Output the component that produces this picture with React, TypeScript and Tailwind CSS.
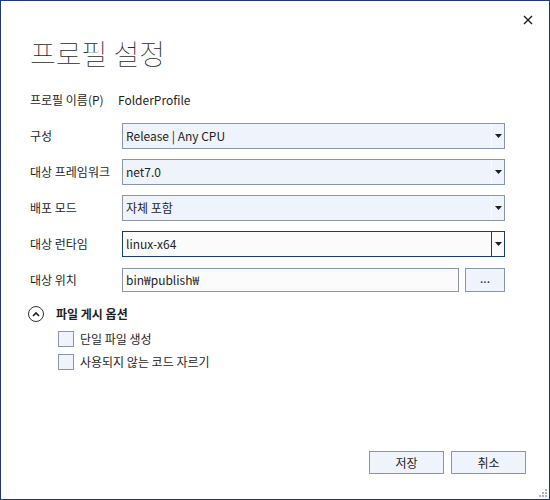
import React from 'react';

const font = { fontFamily: '"Noto Sans CJK KR", "Noto Sans", sans-serif' };

const Arrow = () => (
    <svg width="7" height="4" viewBox="0 0 7 4"><path d="M0 0h7L3.5 4z" fill="#1e1e1e" /></svg>
);

const Select = ({ value, focused }: { value: string; focused?: boolean }) => (
    <div className={`flex h-[26px] flex-1 items-stretch border ${focused ? 'border-[#1b3a73] bg-[#fbfbfb]' : 'border-[#8a95a7] bg-[#eff3fb]'}`}>
        <div className="flex flex-1 items-center pl-[3px] text-[12px] text-[#1e1e1e]">{value}</div>
        <div className={`flex w-[13px] items-center justify-center border-l ${focused ? 'border-[#1b3a73]' : 'border-[#fbfcfe]'}`}>
            <Arrow />
        </div>
    </div>
);

const Row = ({ label, children }: { label: string; children: React.ReactNode }) => (
    <div className="flex h-[36px] items-center">
        <div className="w-[92px] text-[12px] text-[#1e1e1e]">{label}</div>
        {children}
    </div>
);

const Check = ({ label }: { label: string }) => (
    <div className="flex h-[23px] items-center">
        <div className="h-[16px] w-[16px] border border-[#8a95a7] bg-[#eff3fb]" />
        <span className="ml-[6px] text-[12px] text-[#1e1e1e]">{label}</span>
    </div>
);

export default function App() {
    return (
        <div style={font} className="relative flex h-[500px] w-[550px] flex-col border border-[#1b3a73] bg-white pl-[29px] pr-[44px]">
            <button className="absolute right-[16px] top-[14px] text-[#1e1e1e]">
                <svg width="10" height="10" viewBox="0 0 10 10"><path d="M1 1l8 8M9 1l-8 8" stroke="#1e1e1e" strokeWidth="1.4" /></svg>
            </button>

            <h1 className="mt-[34px] text-[28px] font-thin leading-[36px] text-[#2a2a2a]">프로필 설정</h1>

            <div className="mt-[17px] flex h-[24px] items-center text-[12px] text-[#1e1e1e]">
                <span className="w-[88px]">프로필 이름(P)</span>
                <span>FolderProfile</span>
            </div>

            <div className="mt-[6px] flex flex-col">
                <Row label="구성"><Select value="Release | Any CPU" /></Row>
                <Row label="대상 프레임워크"><Select value="net7.0" /></Row>
                <Row label="배포 모드"><Select value="자체 포함" /></Row>
                <Row label="대상 런타임"><Select value="linux-x64" focused /></Row>
                <Row label="대상 위치">
                    <div className="flex h-[24px] flex-1 items-center border border-[#8a95a7] bg-[#fbfbfb] pl-[3px] text-[12px] text-[#1e1e1e]">bin₩publish₩</div>
                    <button className="ml-[6px] flex h-[24px] w-[40px] items-center justify-center border border-[#8a95a7] bg-[#eff3fb] pb-[4px] text-[12px] text-[#1e1e1e]">...</button>
                </Row>
            </div>

            <div className="ml-[-2px] mt-[6px] flex h-[20px] items-center">
                <div className="flex h-[16px] w-[16px] items-center justify-center rounded-full border border-[#333]">
                    <svg width="8" height="6" viewBox="0 0 8 6"><path d="M1 5l3-3 3 3" stroke="#1e1e1e" strokeWidth="1.6" fill="none" /></svg>
                </div>
                <span className="ml-[12px] text-[12px] font-bold text-[#1e1e1e]">파일 게시 옵션</span>
            </div>

            <div className="mt-[3px] flex flex-col pl-[28px]">
                <Check label="단일 파일 생성" />
                <Check label="사용되지 않는 코드 자르기" />
            </div>

            <div className="mt-auto mb-[25px] mr-[-21px] flex justify-end gap-[7px]">
                <button className="h-[23px] w-[75px] border border-[#8a95a7] bg-[#eff3fb] text-[12px] text-[#1e1e1e]">저장</button>
                <button className="h-[23px] w-[75px] border border-[#8a95a7] bg-[#eff3fb] text-[12px] text-[#1e1e1e]">취소</button>
            </div>

            <svg className="absolute bottom-[2px] right-[2px]" width="10" height="10" viewBox="0 0 10 10" fill="#a7b0c2">
                <rect x="8" y="2" width="2" height="2" />
                <rect x="5" y="5" width="2" height="2" />
                <rect x="8" y="5" width="2" height="2" />
                <rect x="2" y="8" width="2" height="2" />
                <rect x="5" y="8" width="2" height="2" />
                <rect x="8" y="8" width="2" height="2" />
            </svg>
        </div>
    );
}
